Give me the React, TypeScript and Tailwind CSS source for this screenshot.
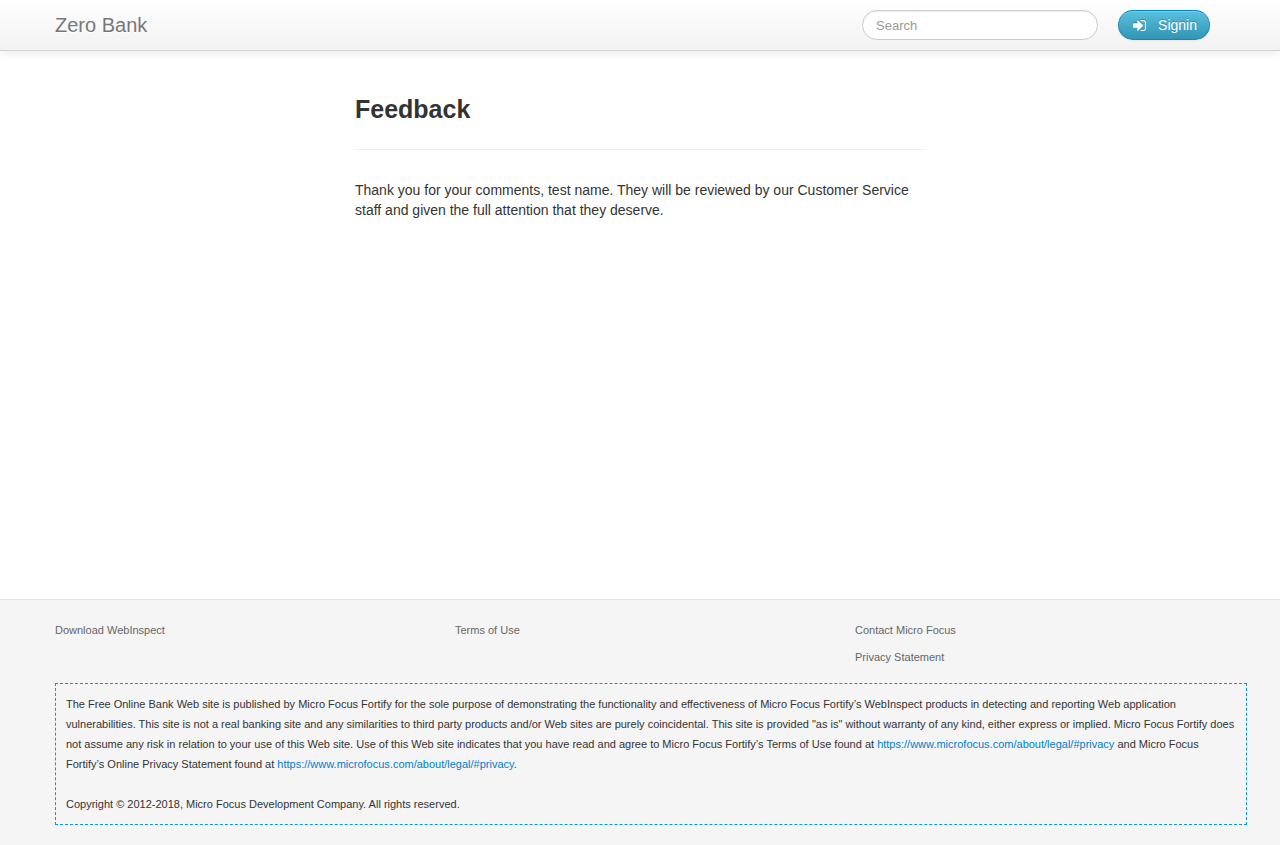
const LEGAL = "https://www.microfocus.com/about/legal/#privacy";

function SigninIcon() {
  return (
    <svg
      viewBox="0 0 1536 1280"
      className="ml-[2px] h-[11px] w-[13px] fill-white drop-shadow-[0_-1px_0_rgba(0,0,0,0.25)]"
      aria-hidden="true"
    >
      <path d="M1184 640q0 26-19 45l-544 544q-19 19-45 19t-45-19-19-45V896H64q-26 0-45-19T0 832V448q0-26 19-45t45-19h448V96q0-26 19-45t45-19 45 19l544 544q19 19 19 45zM1536 288v704q0 119-84.500 203.500T1248 1280H928q-13 0-22.500-9.500T896 1248q0-4-1-20t-.5-26.500 3-23.500 10-19.500T928 1152h320q66 0 113-47t47-113V288q0-66-47-113t-113-47H936l-11.500-1-11.500-3-8-5.500-7-9-2-13.500q0-4-1-20t-.5-26.500 3-23.500 10-19.500T928 0h320q119 0 203.500 84.500T1536 288z" />
    </svg>
  );
}

function Header() {
  return (
    <header className="border-b border-[#d4d4d4] bg-linear-to-b from-white to-[#f2f2f2] shadow-[0_1px_10px_rgba(0,0,0,0.1)]">
      <div className="mx-auto flex h-[50px] max-w-[1170px] items-center">
        <a href="#" className="text-xl leading-5 text-[#777777] [text-shadow:0_1px_0_#fff]">
          Zero Bank
        </a>
        <form className="ml-auto" onSubmit={(e) => e.preventDefault()}>
          <input
            type="text"
            aria-label="Search"
            placeholder="Search"
            className="block h-[30px] w-[236px] rounded-full border border-[#cccccc] bg-white px-[13px] text-[13px] leading-5 text-[#555555] shadow-[inset_0_1px_1px_rgba(0,0,0,0.075)] placeholder:text-[#999999]"
          />
        </form>
        <button
          type="button"
          className="mr-[15px] ml-5 flex h-[30px] items-center gap-3 rounded-full border border-[#1f86a8] border-t-[#0088cc] bg-linear-to-b from-[#5bc0de] to-[#2f96b4] px-3 text-sm leading-5 text-white shadow-[inset_0_1px_0_rgba(255,255,255,0.2),0_1px_2px_rgba(0,0,0,0.05)] [text-shadow:0_-1px_0_rgba(0,0,0,0.25)]"
        >
          <SigninIcon />
          Signin
        </button>
      </div>
    </header>
  );
}

function LegalLink() {
  return (
    <a href={LEGAL} className="text-[#0080cc]">
      {LEGAL}
    </a>
  );
}

export default function App() {
  return (
    <div className="flex min-h-screen flex-col bg-white font-['Liberation_Sans',Arial,sans-serif] text-sm leading-5 text-[#333333]">
      <Header />
      <main className="mx-auto w-full max-w-[570px] flex-1 pt-10">
        <h1 className="border-b border-[#eeeeee] pb-[22px] text-[25px] leading-9 font-bold">Feedback</h1>
        <p className="pt-[30px]">
          Thank you for your comments, test name. They will be reviewed by our Customer Service staff and given the full
          attention that they deserve.
        </p>
      </main>
      <footer className="border-t border-[#e5e5e5] bg-[#f5f5f5] pt-5 pb-5 text-[11px]">
        <div className="mx-auto max-w-[1170px]">
          <div className="grid grid-cols-[400px_400px_1fr] text-[#666666]">
            <a href="#">Download WebInspect</a>
            <a href="#">Terms of Use</a>
            <div className="flex flex-col items-start gap-[7px]">
              <a href="#">Contact Micro Focus</a>
              <a href="#">Privacy Statement</a>
            </div>
          </div>
          <div className="mt-4 -mr-[22px] border border-dashed border-[#049cdb] p-[10px]">
            <p>
              The Free Online Bank Web site is published by Micro Focus Fortify for the sole purpose of demonstrating the
              functionality and effectiveness of Micro Focus Fortify’s WebInspect products in detecting and reporting Web
              application vulnerabilities. This site is not a real banking site and any similarities to third party
              products and/or Web sites are purely coincidental. This site is provided "as is" without warranty of any
              kind, either express or implied. Micro Focus Fortify does not assume any risk in relation to your use of
              this Web site. Use of this Web site indicates that you have read and agree to Micro Focus Fortify’s Terms of
              Use found at <LegalLink /> and Micro Focus Fortify’s Online Privacy Statement found at <LegalLink />.
            </p>
            <p className="mt-5">Copyright © 2012-2018, Micro Focus Development Company. All rights reserved.</p>
          </div>
        </div>
      </footer>
    </div>
  );
}
